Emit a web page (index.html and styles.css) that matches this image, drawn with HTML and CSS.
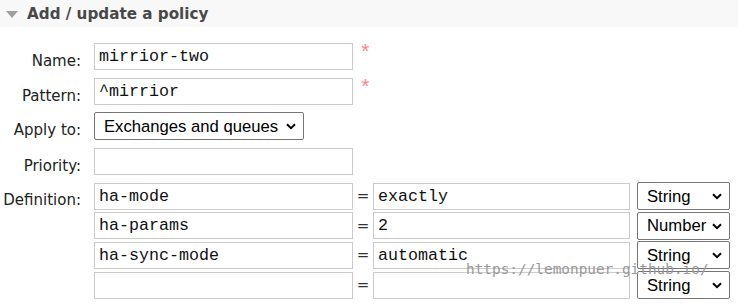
FILE: index.html
```html
<!DOCTYPE html>
<html lang="en">
<head>
<meta charset="UTF-8">
<title>Add / update a policy</title>
<link rel="stylesheet" href="styles.css">
</head>
<body>

<div class="section">
  <h2 class="section-title"><span class="toggle"></span>Add / update a policy</h2>

  <form class="policy-form">
    <div class="row">
      <label>Name:</label>
      <div class="field">
        <input type="text" class="text" value="mirrior-two">
        <span class="mand">*</span>
      </div>
    </div>

    <div class="row">
      <label>Pattern:</label>
      <div class="field">
        <input type="text" class="text" value="^mirrior">
        <span class="mand">*</span>
      </div>
    </div>

    <div class="row">
      <label>Apply to:</label>
      <div class="field">
        <span class="select-wrap apply">
          <select>
            <option>Exchanges and queues</option>
            <option>Exchanges</option>
            <option>Queues</option>
          </select>
          <svg class="chevron" width="10" height="7" viewBox="0 0 10 7"><path d="M1 1.2 L5 5.2 L9 1.2" fill="none" stroke="#000" stroke-width="2"/></svg>
        </span>
      </div>
    </div>

    <div class="row">
      <label>Priority:</label>
      <div class="field">
        <input type="text" class="text" value="">
      </div>
    </div>

    <div class="row">
      <label>Definition:</label>
      <div class="defs">
        <div class="def-row">
          <input type="text" class="text" value="ha-mode">
          <span class="eq">=</span>
          <input type="text" class="text val" value="exactly">
          <span class="select-wrap type">
            <select><option>String</option><option>Number</option><option>Boolean</option><option>List</option></select>
            <svg class="chevron" width="10" height="7" viewBox="0 0 10 7"><path d="M1 1.2 L5 5.2 L9 1.2" fill="none" stroke="#000" stroke-width="2"/></svg>
          </span>
        </div>
        <div class="def-row">
          <input type="text" class="text" value="ha-params">
          <span class="eq">=</span>
          <input type="text" class="text val" value="2">
          <span class="select-wrap type">
            <select><option>String</option><option selected>Number</option><option>Boolean</option><option>List</option></select>
            <svg class="chevron" width="10" height="7" viewBox="0 0 10 7"><path d="M1 1.2 L5 5.2 L9 1.2" fill="none" stroke="#000" stroke-width="2"/></svg>
          </span>
        </div>
        <div class="def-row">
          <input type="text" class="text" value="ha-sync-mode">
          <span class="eq">=</span>
          <input type="text" class="text val" value="automatic">
          <span class="select-wrap type">
            <select><option>String</option><option>Number</option><option>Boolean</option><option>List</option></select>
            <svg class="chevron" width="10" height="7" viewBox="0 0 10 7"><path d="M1 1.2 L5 5.2 L9 1.2" fill="none" stroke="#000" stroke-width="2"/></svg>
          </span>
        </div>
        <div class="def-row">
          <input type="text" class="text" value="">
          <span class="eq">=</span>
          <input type="text" class="text val" value="">
          <span class="select-wrap type">
            <select><option>String</option><option>Number</option><option>Boolean</option><option>List</option></select>
            <svg class="chevron" width="10" height="7" viewBox="0 0 10 7"><path d="M1 1.2 L5 5.2 L9 1.2" fill="none" stroke="#000" stroke-width="2"/></svg>
          </span>
        </div>
      </div>
    </div>
  </form>

  <div class="watermark">https://lemonpuer.github.io/</div>
</div>

</body>
</html>
```

FILE: styles.css
```css
body {
  margin: 0;
  font-family: "DejaVu Sans", Verdana, sans-serif;
  font-size: 15px;
  color: #222;
  background: #fff;
}

.section {
  position: relative;
}

.section-title {
  display: flex;
  align-items: center;
  height: 27px;
  margin: 0;
  padding-left: 6px;
  background: #f8f8f8;
  font-size: 15.2px;
  font-weight: bold;
  color: #484848;
}

.toggle {
  width: 0;
  height: 0;
  margin: 1px 9px 0 0;
  border-left: 6px solid transparent;
  border-right: 6px solid transparent;
  border-top: 7px solid #a0a0a0;
}

.policy-form {
  padding-top: 16px;
}

.row {
  display: grid;
  grid-template-columns: 81px 1fr;
  column-gap: 13px;
  margin-bottom: 7.5px;
}

.row label {
  text-align: right;
  line-height: 18px;
  padding-top: 9px;
}

.field {
  display: flex;
  align-items: flex-start;
}

.text {
  box-sizing: border-box;
  width: 259px;
  height: 27px;
  margin: 0;
  padding: 0 4px;
  border: 1px solid #ccc;
  font-family: "Liberation Mono", "Courier New", monospace;
  font-size: 16.67px;
  color: #111;
  background: #fff;
}

.text.val {
  width: 257px;
}

.mand {
  margin: -1px 0 0 6px;
  font-family: "Liberation Mono", monospace;
  font-size: 21px;
  line-height: 24px;
  color: #f88;
}

.select-wrap {
  position: relative;
  display: inline-block;
  height: 28px;
}

.select-wrap select {
  box-sizing: border-box;
  width: 100%;
  height: 28px;
  margin: 0;
  padding: 0 0 0 9px;
  border: 1px solid #767676;
  border-radius: 2px;
  appearance: none;
  -webkit-appearance: none;
  font-family: "Liberation Sans", Arial, sans-serif;
  font-size: 16.67px;
  color: #000;
  background: #fff;
}

.chevron {
  position: absolute;
  right: 8px;
  top: 11px;
  pointer-events: none;
}

.apply {
  width: 210px;
}

.defs {
  display: flex;
  flex-direction: column;
  gap: 1.7px;
}

.def-row {
  display: flex;
  align-items: center;
  height: 28px;
}

.eq {
  width: 20px;
  text-align: center;
  font-size: 15px;
  color: #333;
}

.type {
  width: 93px;
  margin-left: 7px;
}

.watermark {
  position: absolute;
  left: 466px;
  top: 261px;
  font-family: "DejaVu Sans Mono", monospace;
  font-size: 14.4px;
  color: #999;
  pointer-events: none;
}
```
